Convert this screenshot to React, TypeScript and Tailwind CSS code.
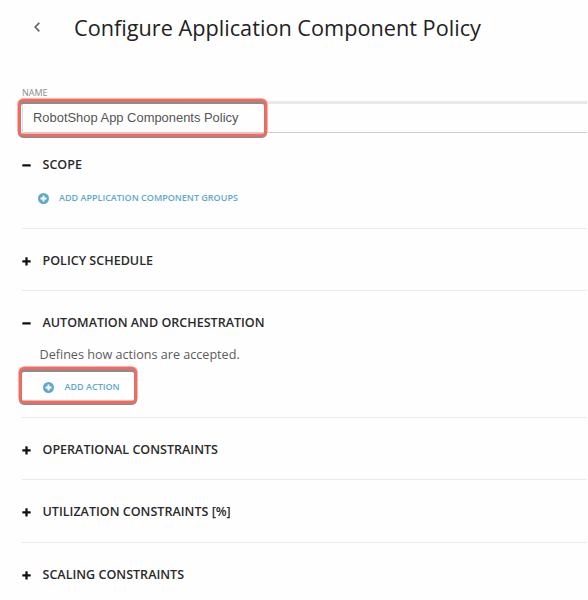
import type { ReactNode } from "react";

function Toggle({ open }: { open: boolean }) {
  return (
    <svg className="block h-[9px] w-[9px] shrink-0" viewBox="0 0 9 9" fill="#111">
      <rect x="0.3" y="3.2" width="8.4" height="2.3" rx="0.6" />
      {!open && <rect x="3.35" y="0.2" width="2.3" height="8.4" rx="0.6" />}
    </svg>
  );
}

function AddLink({ children }: { children: ReactNode }) {
  return (
    <button className="flex h-4 items-center text-[#5fa8cc]">
      <svg className="block h-[11px] w-[11px] shrink-0" viewBox="0 0 11 11">
        <circle cx="5.5" cy="5.5" r="5.5" fill="#5fa8cc" />
        <path d="M5.5 2.5v6M2.5 5.5h6" stroke="#fff" strokeWidth="1.9" />
      </svg>
      {children}
    </button>
  );
}

function Highlight({ className }: { className: string }) {
  return (
    <div className={`pointer-events-none absolute ${className}`}>
      <div className="absolute inset-x-0 top-[2px] -bottom-[2px] rounded-[5px] border-[3px] border-[#8c8c8c] blur-[0.6px]" />
      <div className="absolute inset-0 rounded-[5px] border-2 border-[#f8685c] shadow-[0_0_0_0.5px_#f8685c,inset_0_0_0_0.5px_#f8685c]" />
    </div>
  );
}

function Section({ title, open = false, className, children }: { title: string; open?: boolean; className: string; children?: ReactNode }) {
  return (
    <section className={`border-b border-[#eaeaea] ${className}`}>
      <h2 className="flex h-5 items-center text-[12.55px] font-semibold text-[#2a2a2a]">
        <Toggle open={open} />
        <span className="ml-[11.5px] whitespace-nowrap">{title}</span>
      </h2>
      {children}
    </section>
  );
}

export default function App() {
  return (
    <main className="h-[600px] w-[588px] overflow-hidden bg-[#fefefe] pr-px pl-[22px] font-['Open_Sans',sans-serif]">
      <header className="flex h-[86px] items-start pt-[12px]">
        <svg className="mt-[9px] ml-[11px] block h-3 w-2" viewBox="0 0 8 12" fill="none" stroke="#666" strokeWidth="1.7">
          <path d="M6.3 1.9L2.2 6l4.1 4.3" />
        </svg>
        <h1 className="ml-[33px] text-[21.7px] leading-8 whitespace-nowrap text-[#222]">Configure Application Component Policy</h1>
      </header>
      <label className="block h-[15px] text-[9px] leading-[13px] text-[#8c8c8c]">NAME</label>
      <div className="relative h-[32px] border-t-[3px] border-b border-l border-t-[#e8e8e8] border-b-[#cfcfcf] border-l-[#ddd] pl-[10px] font-['Liberation_Sans',sans-serif] text-[12.93px] leading-[27px] text-[#555]">
        <span>RobotShop App Components Policy</span>
        <Highlight className="-top-[5px] -left-[5px] h-[37px] w-[249px]" />
      </div>

      <Section title="SCOPE" open className="h-[96px] pt-[22px]">
        <div className="mt-[15px] pl-4 text-[9px] font-semibold">
          <AddLink><span className="ml-[10px]">ADD APPLICATION COMPONENT GROUPS</span></AddLink>
        </div>
      </Section>
      <Section title="POLICY SCHEDULE" className="h-[62px] pt-[22px]" />
      <Section title="AUTOMATION AND ORCHESTRATION" open className="h-[127px] pt-[22px]">
        <p className="mt-[12px] pl-[17.5px] text-[12.6px] leading-5 text-[#5c5c5c]">Defines how actions are accepted.</p>
        <div className="relative mt-[14px] pl-[21px] text-[9px] font-semibold">
          <AddLink><span className="ml-[10.5px]">ADD ACTION</span></AddLink>
          <Highlight className="-top-[12px] -left-[3px] h-[36px] w-[118px]" />
        </div>
      </Section>
      <Section title="OPERATIONAL CONSTRAINTS" className="h-[62px] pt-[22px]" />
      <Section title="UTILIZATION CONSTRAINTS [%]" className="h-[63px] pt-[22px]" />
      <Section title="SCALING CONSTRAINTS" className="h-[62px] pt-[22px]" />
    </main>
  );
}
